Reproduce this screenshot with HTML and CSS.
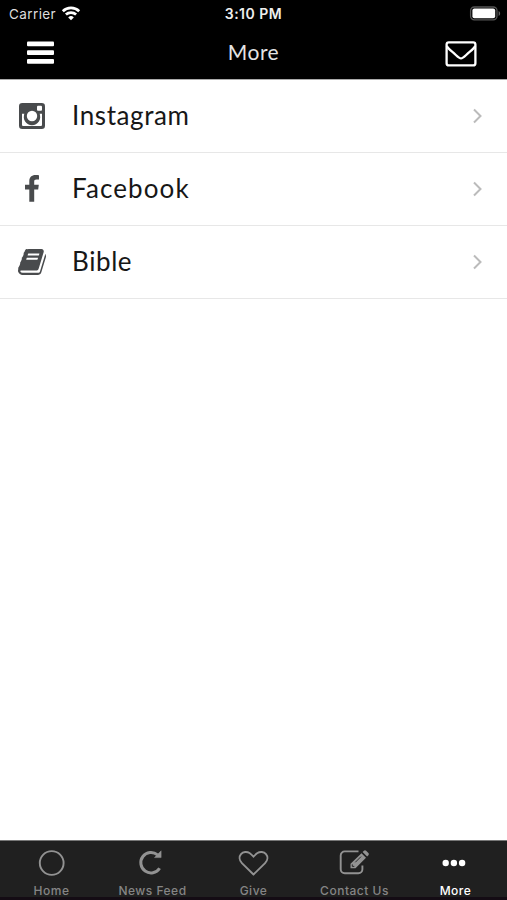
FILE: index.html
```html
<!DOCTYPE html>
<html lang="en">

<head>
    <meta charset="UTF-8">
    <meta name="viewport" content="width=device-width, initial-scale=1.0">
    <title>More</title>
    <link rel="stylesheet" href="styles.css">
</head>

<body>
    <div class="app">
        <header>
            <div class="status-bar">
                <div class="carrier">
                    <span class="carrier-name">Carrier</span>
                    <svg width="20" height="16" viewBox="0 0 20 16" fill="none" stroke="#fff" stroke-width="2.7">
                        <path d="M1.8 5.2a11.8 11.8 0 0 1 16.4 0" />
                        <path d="M4.9 8.6a7.4 7.4 0 0 1 10.2 0" />
                        <path d="M10 14.3l-2.8-2.9a4 4 0 0 1 5.6 0z" fill="#fff" stroke="none" />
                    </svg>
                </div>
                <span class="time">3:10 PM</span>
                <div class="battery">
                    <svg width="32" height="16" viewBox="0 0 32 16">
                        <rect x="1.6" y="1" width="26.4" height="12.8" rx="3.7" fill="none" stroke="#555" stroke-width="1.3" />
                        <rect x="3.4" y="2.6" width="22.8" height="9.6" rx="2" fill="#fff" />
                        <path d="M29.6 4.9c2 .8 2 4.2 0 5z" fill="#666" />
                    </svg>
                </div>
            </div>
            <div class="nav-bar">
                <button class="menu-btn" aria-label="Menu">
                    <svg width="27" height="24" viewBox="0 0 27 24" fill="#fff">
                        <rect y="0.4" width="27" height="4.8" rx="1" />
                        <rect y="9.2" width="27" height="4.8" rx="1" />
                        <rect y="18" width="27" height="4.8" rx="1" />
                    </svg>
                </button>
                <h1>More</h1>
                <button class="mail-btn" aria-label="Mail">
                    <svg width="32" height="26" viewBox="0 0 32 26" fill="none" stroke="#fff" stroke-width="2.3" stroke-linejoin="round">
                        <rect x="1.6" y="1.4" width="28.8" height="23" rx="2.2" />
                        <path d="M1.8 5c1 2.300 3.500 4.200 6.500 6.700 3.200 2.700 5.500 5.700 7.700 5.700s4.500-3 7.700-5.700c3-2.500 5.500-4.400 6.500-6.700" />
                    </svg>
                </button>
            </div>
        </header>

        <ul class="list">
            <li>
                <svg class="icon" width="28" height="28" viewBox="0 0 28 28">
                    <rect x="1" y="1" width="26" height="26" rx="3.300" fill="#494b4d" />
                    <path d="M4 11.800h2.500a8.200 8.200 0 1 0 15 0H24v11.100a1.100 1.100 0 0 1-1.100 1.100H5.100A1.100 1.100 0 0 1 4 22.900z" fill="#fff" />
                    <circle cx="14" cy="14" r="7.800" fill="#494b4d" />
                    <circle cx="14" cy="14" r="5.200" fill="#fff" />
                    <rect x="19" y="3.800" width="5" height="5" rx="1" fill="#fff" />
                </svg>
                <span class="label instagram">Instagram</span>
                <svg class="chevron" width="12" height="16" viewBox="0 0 12 16">
                    <path d="M2 1.500l6.500 6.500L2 14.500" />
                </svg>
            </li>
            <li>
                <svg class="icon" width="28" height="28" viewBox="0 0 28 28" fill="#494b4d">
                    <path d="M21 .3v4.200h-2.500c-1.900 0-2.300.9-2.300 2.300v3h4.600l-.6 4.600h-4v12.300h-4.900V14.400H7v-4.600h4.300V6.300C11.300 2.300 13.800.1 17.400.1c1.700 0 3.200.1 3.600.2z" />
                </svg>
                <span class="label facebook">Facebook</span>
                <svg class="chevron" width="12" height="16" viewBox="0 0 12 16">
                    <path d="M2 1.500l6.500 6.500L2 14.500" />
                </svg>
            </li>
            <li>
                <svg class="icon" width="28" height="28" viewBox="0 0 1664 1536" fill="#494b4d">
                    <path d="M1639 350q40 57 18 129l-275 906q-19 64-76.500 107.500T1183 1536H260q-77 0-148.500-53.500T12 1351q-24-67-2-127 0-4 3-27t4-37q1-8-3-21.500t-3-19.500q2-11 8-21t16.500-23.500T52 1051q23-38 45-91.500t30-91.500q3-10 .5-30t-.5-28q3-11 17-28t17-23q21-36 42-92t25-90q1-9-2.500-32t.5-28q4-13 22-30.500t22-22.500q19-26 42.500-84.500T340 283q1-8-3-25.500t-2-26.500q2-8 9-18t18-23 17-21q8-12 16.500-30.500t15-35 16-36 19.500-32T469.500 12 517 .5 581 6l-1 3q38-9 51-9h761q74 0 114 56t18 130l-274 906q-36 119-71.500 153.500T1050 1280H181q-27 0-38 15-11 16-1 43 24 70 144 70h923q29 0 56-15.500t35-41.500l300-987q7-22 5-57 38 15 59 43zM575 352q-4 13 2 22.500t20 9.500h608q13 0 25.500-9.500T1247 352l21-64q4-13-2-22.500t-20-9.500H638q-13 0-25.500 9.500T596 288zm-83 256q-4 13 2 22.500t20 9.500h608q13 0 25.500-9.500T1164 608l21-64q4-13-2-22.500t-20-9.500H555q-13 0-25.500 9.500T513 544z" />
                </svg>
                <span class="label bible">Bible</span>
                <svg class="chevron" width="12" height="16" viewBox="0 0 12 16">
                    <path d="M2 1.500l6.500 6.500L2 14.500" />
                </svg>
            </li>
        </ul>

        <nav class="tab-bar">
            <a class="tab">
                <svg width="34" height="30" viewBox="0 0 34 30">
                    <circle cx="16.700" cy="15" r="11.900" />
                </svg>
                <span>Home</span>
            </a>
            <a class="tab">
                <svg width="34" height="30" viewBox="0 0 34 30">
                    <path d="M21.500 6.800A10.200 10.200 0 1 0 23.600 20.200" stroke-width="3" />
                    <path d="M18.500 9.600h6.600V2.800z" fill="#929292" stroke-width="0.500" />
                </svg>
                <span>News Feed</span>
            </a>
            <a class="tab">
                <svg width="34" height="30" viewBox="0 0 34 30">
                    <path d="M16.500 26.500L4.900 15.100C2.100 12.300 2 8.500 4 6.100 6.100 3.600 10 3.300 12.500 5c1.600 1.100 3 2.500 4 3.600 1-1.100 2.400-2.500 4-3.600 2.500-1.700 6.400-1.400 8.500 1.100 2 2.400 1.900 6.200-.9 9z" />
                </svg>
                <span>Give</span>
            </a>
            <a class="tab">
                <svg width="34" height="30" viewBox="0 0 34 30">
                    <path d="M20.500 3.400H6.700a4 4 0 0 0-4 4v13.800a4 4 0 0 0 4 4h13.700a4 4 0 0 0 4-4v-3.700" />
                    <path fill="#929292" stroke="none" d="M23.500 5.200l4.500 4.500L17.500 20.200h-5V15.700zM24.600 4.100l1.300-1.300a1.600 1.600 0 0 1 2.200 0l2.300 2.300a1.600 1.600 0 0 1 0 2.200l-1.300 1.300z" />
                    <path d="M17.300 14.300l5.700-5.700M14.300 16.400v2h2" stroke="#202020" stroke-width="0.900" />
                </svg>
                <span>Contact Us</span>
            </a>
            <a class="tab active">
                <svg width="34" height="30" viewBox="0 0 34 30">
                    <circle cx="6.700" cy="15" r="3.200" />
                    <circle cx="14.900" cy="15" r="3.200" />
                    <circle cx="23.100" cy="15" r="3.200" />
                </svg>
                <span>More</span>
            </a>
        </nav>
    </div>
</body>

</html>
```

FILE: styles.css
```css
* {
    box-sizing: border-box;
}

body {
    margin: 0;
    background: #fff;
}

.app {
    display: flex;
    flex-direction: column;
    height: 900px;
    overflow: hidden;
}

header {
    height: 80px;
    background: #000;
    color: #fff;
    border-bottom: 1px solid #aaa;
}

.status-bar {
    display: grid;
    grid-template-columns: 1fr auto 1fr;
    align-items: center;
    height: 27px;
    font-family: Inter, sans-serif;
    font-size: 13.5px;
}

.carrier {
    display: flex;
    align-items: center;
    gap: 5px;
    padding-left: 9px;
    color: #ddd;
}

.carrier-name {
    letter-spacing: 0.4px;
}

.time {
    font-weight: 600;
    font-size: 14px;
    letter-spacing: 0.5px;
    color: #eee;
}

.battery {
    display: flex;
    justify-content: flex-end;
    padding-right: 6px;
}

.nav-bar {
    display: grid;
    grid-template-columns: 1fr auto 1fr;
    align-items: center;
    height: 52px;
    padding: 0 30px 0 27px;
}

h1 {
    margin: 0;
    padding: 0 0 4px 3px;
    font-family: Lato, sans-serif;
    font-size: 21px;
    font-weight: 400;
    letter-spacing: 0.5px;
    color: #e4e4e4;
}

button {
    display: flex;
    padding: 0;
    border: none;
    background: none;
}

.mail-btn {
    justify-self: end;
    padding-top: 2px;
}

.list {
    flex: 1;
    margin: 0;
    padding: 0;
    list-style: none;
}

.list li {
    display: flex;
    align-items: center;
    height: 73px;
    padding: 0 23px 0 18px;
    border-bottom: 1px solid #e7e7e7;
}

.label {
    flex: 1;
    padding: 0 0 2px 26px;
    font-family: Lato, sans-serif;
    font-size: 26px;
    color: #171717;
}

.instagram {
    letter-spacing: 0.6px;
}

.facebook {
    letter-spacing: 1.1px;
}

.bible {
    letter-spacing: 0.6px;
}

.chevron {
    fill: none;
    stroke: #bbb;
    stroke-width: 2;
}

.tab-bar {
    display: grid;
    grid-template-columns: repeat(5, 101px);
    height: 60px;
    padding-left: 1px;
    border-top: 1px solid #777;
    border-bottom: 3px solid #140c14;
    background: #202020;
}

.tab {
    display: flex;
    flex-direction: column;
    align-items: center;
    padding-top: 7px;
    font-family: Inter, sans-serif;
    font-size: 12px;
    font-weight: 500;
    line-height: 16px;
    letter-spacing: 0.5px;
    color: #858585;
}

.tab svg {
    fill: none;
    stroke: #929292;
    stroke-width: 1.9;
}

.tab span {
    margin-top: 5px;
}

.tab.active {
    color: #fff;
}

.tab.active svg {
    fill: #fff;
    stroke: none;
}
```
